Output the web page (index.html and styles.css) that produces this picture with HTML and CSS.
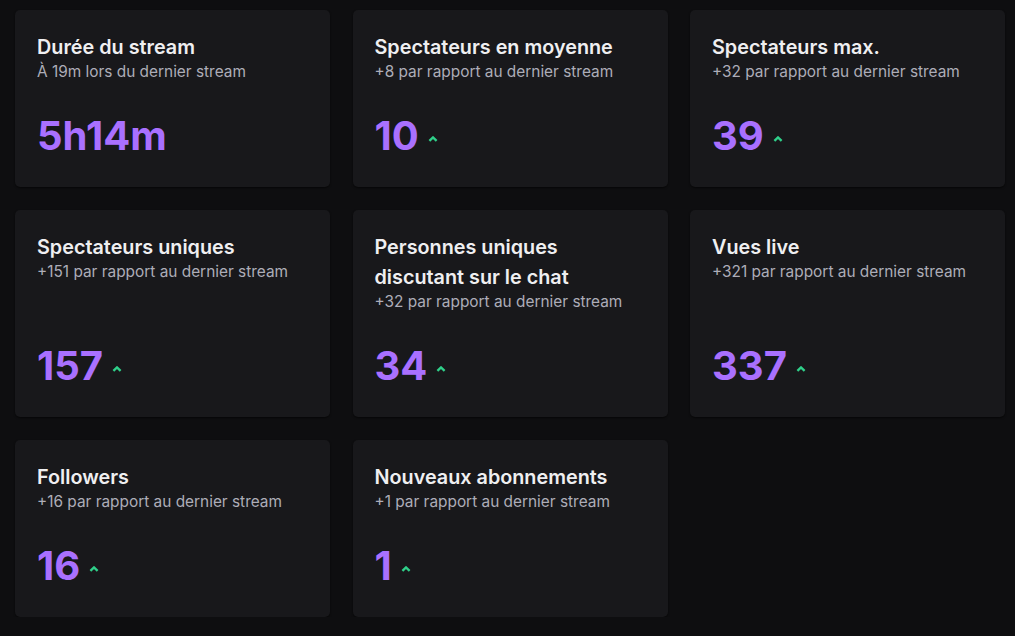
FILE: index.html
```html
<!DOCTYPE html>
<html>
	<head>
		<meta charset="utf-8">
		<title>Statistiques du stream</title>
		<link rel="stylesheet" href="styles.css">
	</head>
	<body>
		<div class="stats">
			<div class="card">
				<h3 class="title">Durée du stream</h3>
				<p class="sub">À 19m lors du dernier stream</p>
				<div class="value"><span class="num">5h14m</span></div>
			</div>
			<div class="card">
				<h3 class="title">Spectateurs en moyenne</h3>
				<p class="sub">+8 par rapport au dernier stream</p>
				<div class="value"><span class="num">10</span><svg class="up" viewBox="0 0 8 5"><path d="M1 4 L4 1.2 L7 4"/></svg></div>
			</div>
			<div class="card">
				<h3 class="title">Spectateurs max.</h3>
				<p class="sub">+32 par rapport au dernier stream</p>
				<div class="value"><span class="num">39</span><svg class="up" viewBox="0 0 8 5"><path d="M1 4 L4 1.2 L7 4"/></svg></div>
			</div>
			<div class="card">
				<h3 class="title">Spectateurs uniques</h3>
				<p class="sub">+151 par rapport au dernier stream</p>
				<div class="value"><span class="num">157</span><svg class="up" viewBox="0 0 8 5"><path d="M1 4 L4 1.2 L7 4"/></svg></div>
			</div>
			<div class="card">
				<h3 class="title">Personnes uniques discutant sur le chat</h3>
				<p class="sub">+32 par rapport au dernier stream</p>
				<div class="value"><span class="num">34</span><svg class="up" viewBox="0 0 8 5"><path d="M1 4 L4 1.2 L7 4"/></svg></div>
			</div>
			<div class="card">
				<h3 class="title">Vues live</h3>
				<p class="sub">+321 par rapport au dernier stream</p>
				<div class="value"><span class="num">337</span><svg class="up" viewBox="0 0 8 5"><path d="M1 4 L4 1.2 L7 4"/></svg></div>
			</div>
			<div class="card">
				<h3 class="title">Followers</h3>
				<p class="sub">+16 par rapport au dernier stream</p>
				<div class="value"><span class="num">16</span><svg class="up" viewBox="0 0 8 5"><path d="M1 4 L4 1.2 L7 4"/></svg></div>
			</div>
			<div class="card">
				<h3 class="title">Nouveaux abonnements</h3>
				<p class="sub">+1 par rapport au dernier stream</p>
				<div class="value"><span class="num">1</span><svg class="up" viewBox="0 0 8 5"><path d="M1 4 L4 1.2 L7 4"/></svg></div>
			</div>
		</div>
	</body>
</html>
```

FILE: styles.css
```css
body {
	margin: 0;
	background-color: #0e0e10;
	font-family: Inter, "Noto Sans", sans-serif;
}

.stats {
	display: grid;
	grid-template-columns: repeat(3, 1fr);
	column-gap: 22.5px;
	row-gap: 23px;
	width: 990px;
	padding: 10px 0 0 15px;
}

.card {
	display: flex;
	flex-direction: column;
	background-color: #18181b;
	border-radius: 5px;
	box-shadow: 0 1px 2px rgba(0, 0, 0, 0.6);
	padding: 22px;
	min-height: 133px;
}

.title {
	margin: 0;
	font-size: 19.8px;
	font-weight: 600;
	line-height: 30px;
	color: #efeff1;
}

.sub {
	margin: 0;
	font-size: 15.4px;
	line-height: 20px;
	color: #adadb8;
}

.value {
	margin-top: auto;
	padding-top: 23px;
	display: flex;
	align-items: center;
	height: 60px;
}

.num {
	font-size: 40px;
	font-weight: 700;
	line-height: 60px;
	color: #a970ff;
	position: relative;
	top: 1px;
}

.up {
	width: 10px;
	height: 6px;
	margin: 8px 0 0 9px;
	fill: none;
	stroke: #2fd08a;
	stroke-width: 2;
}
```
